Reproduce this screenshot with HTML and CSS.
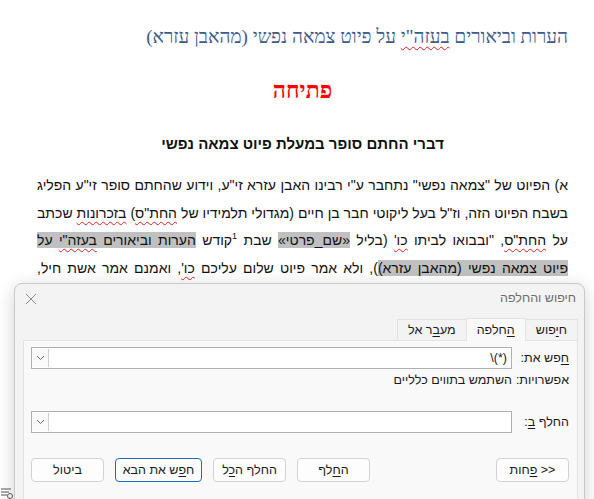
FILE: index.html
```html
<!DOCTYPE html>
<html lang="he" dir="rtl">
<head>
  <meta charset="UTF-8" />
  <title>הערות וביאורים - חיפוש והחלפה</title>
  <link rel="stylesheet" href="styles.css">
</head>
<body>

  <div class="page">
    <h1 class="doc-title">הערות וביאורים <span class="sq">בעזה"י</span> על פיוט צמאה נפשי (מהאבן עזרא)</h1>
    <h2 class="opening">פתיחה</h2>
    <h3 class="subhead">דברי החתם סופר במעלת פיוט צמאה נפשי</h3>
    <p class="body-text">א) הפיוט של "צמאה נפשי" נתחבר ע"י רבינו האבן עזרא זי"ע, וידוע שהחתם סופר זי"ע הפליג<br>
      בשבח הפיוט הזה, וז"ל בעל ליקוטי חבר בן חיים (מגדולי תלמידיו של <span class="sq">החת"ס</span>) <span class="sq">בזכרונות</span> שכתב<br>
      על <span class="sq">החת"ס</span>, "ובבואו לביתו <span class="sq">כו'</span> (בליל <span class="hl">«שם_פרטי»</span> שבת <sup>1</sup>קודש <span class="hl">הערות וביאורים <span class="sq">בעזה"י</span> על</span><br>
      <span class="hl">פיוט צמאה נפשי (מהאבן עזרא)</span>), ולא אמר פיוט שלום עליכם <span class="sq">כו'</span>, ואמנם אמר אשת חיל,</p>
  </div>

  <!-- find & replace dialog floating over the document -->
  <div class="dialog">
    <div class="dlg-bar">
      <span class="dlg-name">חיפוש והחלפה</span>
      <svg class="dlg-close" width="12" height="12" viewBox="0 0 12 12"><path d="M1 1 L11 11 M11 1 L1 11" stroke="#8a8a8a" stroke-width="1"/></svg>
    </div>

    <div class="tabs">
      <span class="tab">ח<u>י</u>פוש</span>
      <span class="tab active"><u>ה</u>חלפה</span>
      <span class="tab">מע<u>ב</u>ר אל</span>
    </div>

    <div class="panel">
      <div class="field">
        <label><u>ח</u>פש את:</label>
        <div class="combo">
          <span class="combo-val">\(*)</span>
          <span class="combo-btn"><svg width="9" height="6" viewBox="0 0 9 6"><path d="M1 1 L4.5 4.5 L8 1" fill="none" stroke="#666" stroke-width="1"/></svg></span>
        </div>
      </div>
      <div class="opts">
        <span class="opts-label">אפשרויות:</span>
        <span>השתמש בתווים כלליים</span>
      </div>
      <div class="field replace">
        <label>החלף <u>ב</u>:</label>
        <div class="combo">
          <span class="combo-val"></span>
          <span class="combo-btn"><svg width="9" height="6" viewBox="0 0 9 6"><path d="M1 1 L4.5 4.5 L8 1" fill="none" stroke="#666" stroke-width="1"/></svg></span>
        </div>
      </div>

      <div class="buttons">
        <button class="btn">&lt;&lt; <u>פ</u>חות</button>
        <span class="spacer"></span>
        <button class="btn">ה<u>ח</u>לף</button>
        <button class="btn">החלף ה<u>כ</u>ל</button>
        <button class="btn focus">ח<u>פ</u>ש את הבא</button>
        <button class="btn">ביטול</button>
      </div>
    </div>
  </div>

  <svg class="status-icon" width="14" height="12" viewBox="0 0 14 12"><path d="M1 2 H11 M1 5 H9 M1 8 H7" stroke="#555" stroke-width="1"/><circle cx="10" cy="9" r="2.5" fill="none" stroke="#555"/></svg>

</body>
</html>
```

FILE: styles.css
```css
body {
  margin: 0;
  width: 594px;
  height: 499px;
  overflow: hidden;
  position: relative;
  background: #fff;
  font-family: "Liberation Sans", Arial, sans-serif;
  color: #111;
}
.page {
  padding: 24px 26px 0 37px;
}
.doc-title {
  margin: 0;
  font-family: "Liberation Serif", "Times New Roman", serif;
  font-weight: normal;
  font-size: 19px;
  line-height: 26px;
  color: #3d5a8c;
  text-align: right;
}
.opening {
  margin: 27px 0 0;
  text-align: center;
  font-family: "Liberation Serif", serif;
  font-size: 23px;
  font-weight: bold;
  line-height: 28px;
  color: #ff0000;
}
.subhead {
  margin: 29px 0 0;
  text-align: center;
  font-size: 15px;
  font-weight: bold;
  line-height: 20px;
  color: #111;
}
.body-text {
  margin: 18px 0 0;
  font-size: 14px;
  line-height: 27.5px;
  text-align: justify;
  text-align-last: justify;
  white-space: nowrap;
}
.body-text sup {
  font-size: 9px;
  vertical-align: 6px;
  line-height: 0;
}
.hl {
  background: #c0c0c0;
}
.sq {
  text-decoration: underline wavy #e02020;
  text-decoration-thickness: 1px;
  text-underline-offset: 3px;
}

.dialog {
  position: absolute;
  left: 14px;
  top: 283px;
  width: 569px;
  height: 240px;
  background: #f3f3f3;
  border: 1px solid #c9c9c9;
  border-radius: 8px;
  box-shadow: 0 4px 18px rgba(0,0,0,0.18);
  font-family: "Liberation Sans", Arial, sans-serif;
  font-size: 12px;
  color: #1a1a1a;
}
.dlg-bar {
  height: 28px;
  display: flex;
  align-items: center;
  justify-content: space-between;
  padding: 0 8px 0 10px;
}
.dlg-name {
  color: #6d6d6d;
  font-size: 12.5px;
}
.dlg-close {
  margin-top: 2px;
}
.tabs {
  display: flex;
  margin: 6px 6px 0 0;
  height: 22px;
  align-items: flex-end;
  position: relative;
  z-index: 1;
}
.tab {
  height: 20px;
  line-height: 20px;
  padding: 0 10px;
  background: #f3f3f3;
  border: 1px solid #e2e2e2;
  border-bottom: none;
  margin-left: -1px;
  font-size: 12.5px;
}
.tab.active {
  height: 22px;
  line-height: 23px;
  background: #f9f9f9;
  position: relative;
  top: 1px;
}
.tab u, .field u, .btn u {
  text-underline-offset: 2px;
}
.panel {
  margin: 0 6px 0 8px;
  height: 200px;
  background: #f9f9f9;
  border: 1px solid #e2e2e2;
  padding: 6px 8px 0 7px;
}
.field {
  display: flex;
  align-items: center;
  height: 22px;
}
.field label {
  width: 57px;
  font-size: 12.5px;
}
.combo {
  flex: 1;
  height: 20px;
  border: 1px solid #b0b0b0;
  background: #fff;
  display: flex;
  align-items: center;
  justify-content: space-between;
}
.combo-val {
  direction: ltr;
  padding-right: 4px;
  font-size: 12.5px;
}
.combo-btn {
  width: 16px;
  height: 18px;
  border-right: 1px solid #d0d0d0;
  display: flex;
  align-items: center;
  justify-content: center;
  margin: 0 1px 0 0;
  background: #fafafa;
}
.opts {
  display: flex;
  gap: 9px;
  margin-top: 4px;
  font-size: 12.5px;
}
.opts-label {
  width: 48px;
}
.field.replace {
  margin-top: 24px;
}
.buttons {
  display: flex;
  gap: 11px;
  margin-top: 25px;
}
.spacer {
  flex: 1;
}
.btn {
  width: 73px;
  height: 24px;
  padding: 0;
  background: #fdfdfd;
  border: 1px solid #d2d2d2;
  border-radius: 4px;
  font-family: "Liberation Sans", Arial, sans-serif;
  font-size: 12.5px;
  color: #1a1a1a;
}
.btn.focus {
  width: 87px;
  border-color: #1a6dc0;
}
.status-icon {
  position: absolute;
  left: 0;
  bottom: 0;
}
```
